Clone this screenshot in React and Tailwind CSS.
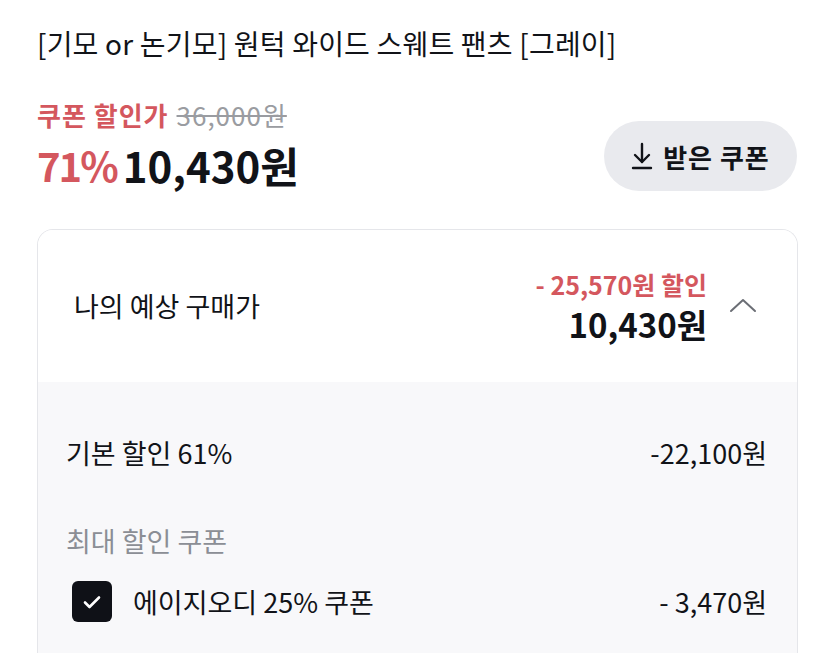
import React from "react";

const F = { fontFamily: '"Noto Sans CJK KR", "Noto Sans", sans-serif' };

export default function App() {
  return (
    <div style={F} className="w-[835px] h-[653px] overflow-hidden bg-white px-[37px] text-[#111318]">
      <h1 className="pt-[23px] text-[28px] leading-[40px] font-normal tracking-[0.2px] whitespace-nowrap">
        [기모 or 논기모] 원턱 와이드 스웨트 팬츠 [그레이]
      </h1>
      <div className="mt-[35px] flex items-start justify-between">
        <div className="flex flex-col">
          <div className="flex items-center gap-[8px] text-[26px] leading-[34px] tracking-[1px]">
            <span className="font-semibold text-[#d4575e]">쿠폰 할인가</span>
            <span className="text-[#9a9ca1] line-through">36,000원</span>
          </div>
          <div className="mt-[8px] flex items-center gap-[6px] leading-[50px] font-bold">
            <span className="text-[40px] tracking-[-2px] text-[#d4575e]">71%</span>
            <span className="text-[42px]">10,430원</span>
          </div>
        </div>
        <button className="mt-[23px] mr-[1px] flex h-[70px] w-[193px] items-center justify-center gap-[10px] rounded-full bg-[#e9eaee] text-[26px] font-bold tracking-[1px]">
          <svg width="22" height="28" viewBox="0 0 22 28" fill="none" stroke="#111318" strokeWidth="2.4" strokeLinecap="round" strokeLinejoin="round">
            <path d="M11 2v18" />
            <path d="M4 13l7 7 7-7" />
            <path d="M2 26h18" />
          </svg>
          <span>받은 쿠폰</span>
        </button>
      </div>

      <div className="mt-[38px] overflow-hidden rounded-t-[16px] border border-[#e5e6ea] border-b-0">
        <div className="flex h-[152px] items-center bg-white pl-[36px] pr-[40px]">
          <span className="flex-1 text-[27px]">나의 예상 구매가</span>
          <div className="flex flex-col items-end">
            <span className="text-[25px] leading-[32px] font-semibold text-[#d4575e]">- 25,570원 할인</span>
            <span className="mt-[4px] text-[33px] leading-[40px] font-bold">10,430원</span>
          </div>
          <svg className="ml-[22px] mb-[2px]" width="28" height="16" viewBox="0 0 28 16" fill="none" stroke="#6b6e75" strokeWidth="2" strokeLinecap="round" strokeLinejoin="round">
            <path d="M2 14L14 3l12 11" />
          </svg>
        </div>
        <div className="h-[300px] bg-[#f8f8fa] pl-[28px] pr-[30px] pt-[51px] text-[27px]">
          <div className="flex items-center justify-between leading-[40px]">
            <span>기본 할인 61%</span>
            <span>-22,100원</span>
          </div>
          <div className="mt-[48px] leading-[40px] text-[#8b8e95]">최대 할인 쿠폰</div>
          <div className="mt-[20px] flex items-center justify-between leading-[41px]">
            <div className="flex items-center">
              <span className="ml-[6px] flex h-[41px] w-[40px] items-center justify-center rounded-[6px] bg-[#0f1117]">
                <svg width="20" height="16" viewBox="0 0 20 16" fill="none" stroke="white" strokeWidth="2.6" strokeLinecap="round" strokeLinejoin="round">
                  <path d="M3 8.5l4.5 4.5L17 3.5" />
                </svg>
              </span>
              <span className="ml-[21px]">에이지오디 25% 쿠폰</span>
            </div>
            <span>- 3,470원</span>
          </div>
        </div>
      </div>
    </div>
  );
}
